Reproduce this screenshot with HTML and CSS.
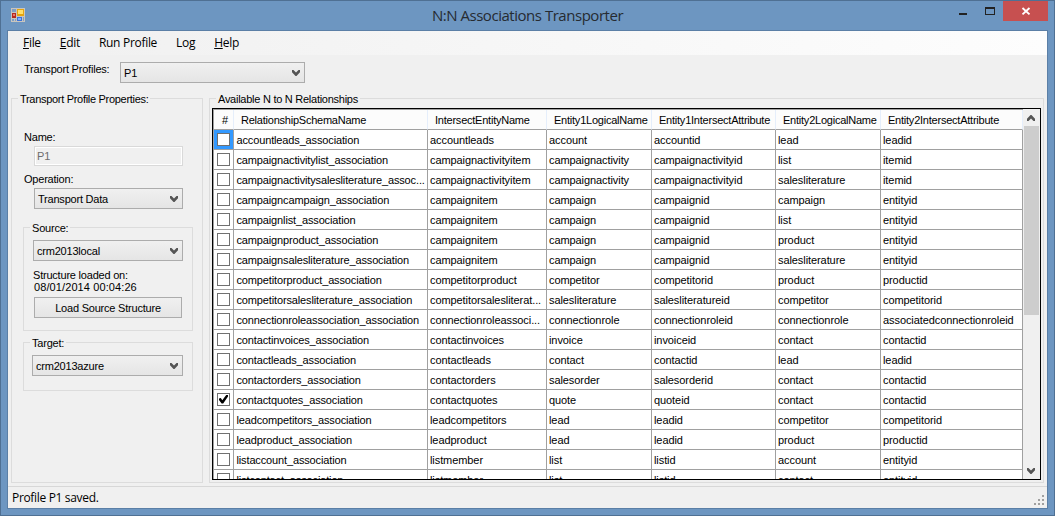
FILE: index.html
```
<!DOCTYPE html>
<html lang="en">
<head>
<meta charset="utf-8">
<title>N:N Associations Transporter</title>
<link rel="stylesheet" href="styles.css">
</head>
<body>
<svg width="0" height="0" class="defs">
  <symbol id="chev-down" viewBox="0 0 8 6"><path d="M0 0h1.5L4 2.6 6.5 0H8v2.3L4.5 6h-1L0 2.3z" fill="#555"/></symbol>
</svg>
<div class="window">
  <header class="titlebar">
    <svg class="app-icon" width="14" height="14" viewBox="0 0 14 14" shape-rendering="crispEdges">
      <rect width="14" height="14" fill="#c9c5be"/>
      <rect x="1" y="1" width="4" height="3" fill="#7f9fc4"/>
      <rect x="1" y="5" width="4" height="5" fill="#b52a1e"/><rect x="2" y="6" width="2" height="2" fill="#e8796c"/>
      <rect x="6" y="1" width="7" height="7" fill="#e5a50f"/><rect x="7" y="2" width="5" height="4" fill="#ffe06a"/>
      <rect x="6" y="9" width="5" height="4" fill="#3c73d8"/><rect x="7" y="10" width="3" height="2" fill="#7fb0ff"/>
      <rect x="1" y="11" width="2" height="2" fill="#7f9fc4"/><rect x="4" y="11" width="1" height="2" fill="#7f9fc4"/><rect x="12" y="9" width="1" height="4" fill="#7f9fc4"/>
    </svg>
    <h1 class="title">N:N Associations Transporter</h1>
    <div class="controls">
      <svg class="ctl" width="27" height="20" viewBox="0 0 27 20" shape-rendering="crispEdges"><rect x="10" y="12" width="8" height="2" fill="#222"/></svg>
      <svg class="ctl" width="27" height="20" viewBox="0 0 27 20" shape-rendering="crispEdges"><path d="M9 6h10v8H9z M10 8v5h8V8z" fill="#222" fill-rule="evenodd"/></svg>
      <svg class="ctl close" width="45" height="20" viewBox="0 0 45 20"><path d="M19.5 7l7 6.4M26.5 7l-7 6.4" stroke="#fff" stroke-width="1.9"/></svg>
    </div>
  </header>
  <div class="client">
    <nav class="menu"><span><u>F</u>ile</span><span><u>E</u>dit</span><span>Run Profile</span><span>Log</span><span><u>H</u>elp</span></nav>
    <div class="toolbar">
      <label class="lbl">Transport Profiles:</label>
      <div class="combo wide"><span>P1</span><svg width="8" height="6"><use href="#chev-down"/></svg></div>
    </div>
    <main class="main">
      <section class="group props">
        <h2 class="legend">Transport Profile Properties:</h2>
        <label class="lbl name-lbl">Name:</label>
        <div class="textbox">P1</div>
        <label class="lbl op-lbl">Operation:</label>
        <div class="combo op"><span>Transport Data</span><svg width="8" height="6"><use href="#chev-down"/></svg></div>
        <section class="group source">
          <h2 class="legend">Source:</h2>
          <div class="combo src"><span>crm2013local</span><svg width="8" height="6"><use href="#chev-down"/></svg></div>
          <p class="loaded">Structure loaded on:<br><span class="date">08/01/2014 00:04:26</span></p>
          <div class="button">Load Source Structure</div>
        </section>
        <section class="group target">
          <h2 class="legend">Target:</h2>
          <div class="combo tgt"><span>crm2013azure</span><svg width="8" height="6"><use href="#chev-down"/></svg></div>
        </section>
      </section>
      <section class="group rel">
        <h2 class="legend">Available N to N Relationships</h2>
        <div class="gridbox">
          <div class="table">
            <div class="row head"><b>#</b><b>RelationshipSchemaName</b><b>IntersectEntityName</b><b>Entity1LogicalName</b><b>Entity1IntersectAttribute</b><b>Entity2LogicalName</b><b>Entity2IntersectAttribute</b></div>
            <div class="row"><i class="sel"><s></s></i><i>accountleads_association</i><i>accountleads</i><i>account</i><i>accountid</i><i>lead</i><i>leadid</i></div>
            <div class="row"><i><s></s></i><i>campaignactivitylist_association</i><i>campaignactivityitem</i><i>campaignactivity</i><i>campaignactivityid</i><i>list</i><i>itemid</i></div>
            <div class="row"><i><s></s></i><i>campaignactivitysalesliterature_assoc...</i><i>campaignactivityitem</i><i>campaignactivity</i><i>campaignactivityid</i><i>salesliterature</i><i>itemid</i></div>
            <div class="row"><i><s></s></i><i>campaigncampaign_association</i><i>campaignitem</i><i>campaign</i><i>campaignid</i><i>campaign</i><i>entityid</i></div>
            <div class="row"><i><s></s></i><i>campaignlist_association</i><i>campaignitem</i><i>campaign</i><i>campaignid</i><i>list</i><i>entityid</i></div>
            <div class="row"><i><s></s></i><i>campaignproduct_association</i><i>campaignitem</i><i>campaign</i><i>campaignid</i><i>product</i><i>entityid</i></div>
            <div class="row"><i><s></s></i><i>campaignsalesliterature_association</i><i>campaignitem</i><i>campaign</i><i>campaignid</i><i>salesliterature</i><i>entityid</i></div>
            <div class="row"><i><s></s></i><i>competitorproduct_association</i><i>competitorproduct</i><i>competitor</i><i>competitorid</i><i>product</i><i>productid</i></div>
            <div class="row"><i><s></s></i><i>competitorsalesliterature_association</i><i>competitorsalesliterat...</i><i>salesliterature</i><i>salesliteratureid</i><i>competitor</i><i>competitorid</i></div>
            <div class="row"><i><s></s></i><i>connectionroleassociation_association</i><i>connectionroleassoci...</i><i>connectionrole</i><i>connectionroleid</i><i>connectionrole</i><i>associatedconnectionroleid</i></div>
            <div class="row"><i><s></s></i><i>contactinvoices_association</i><i>contactinvoices</i><i>invoice</i><i>invoiceid</i><i>contact</i><i>contactid</i></div>
            <div class="row"><i><s></s></i><i>contactleads_association</i><i>contactleads</i><i>contact</i><i>contactid</i><i>lead</i><i>leadid</i></div>
            <div class="row"><i><s></s></i><i>contactorders_association</i><i>contactorders</i><i>salesorder</i><i>salesorderid</i><i>contact</i><i>contactid</i></div>
            <div class="row"><i><s><svg width="9" height="9" viewBox="0 0 9 9"><path d="M0 3.6L1.8 3l1.5 2.2L7.2 0H9v1.6L4.2 8.6H2.6L0 5z" fill="#000"/></svg></s></i><i>contactquotes_association</i><i>contactquotes</i><i>quote</i><i>quoteid</i><i>contact</i><i>contactid</i></div>
            <div class="row"><i><s></s></i><i>leadcompetitors_association</i><i>leadcompetitors</i><i>lead</i><i>leadid</i><i>competitor</i><i>competitorid</i></div>
            <div class="row"><i><s></s></i><i>leadproduct_association</i><i>leadproduct</i><i>lead</i><i>leadid</i><i>product</i><i>productid</i></div>
            <div class="row"><i><s></s></i><i>listaccount_association</i><i>listmember</i><i>list</i><i>listid</i><i>account</i><i>entityid</i></div>
            <div class="row"><i><s></s></i><i>listcontact_association</i><i>listmember</i><i>list</i><i>listid</i><i>contact</i><i>entityid</i></div>
          </div>
          <div class="scroll">
            <svg class="up" width="8" height="6"><use href="#chev-down"/></svg>
            <div class="thumb"></div>
            <svg class="down" width="8" height="6"><use href="#chev-down"/></svg>
          </div>
        </div>
      </section>
    </main>
    <footer class="status"><span>Profile P1 saved.</span>
      <svg width="10" height="10" viewBox="0 0 10 10" shape-rendering="crispEdges" fill="#a0a0a0"><path d="M8 0h2v2H8zM8 4h2v2H8zM8 8h2v2H8zM4 4h2v2H4zM4 8h2v2H4zM0 8h2v2H0z"/></svg>
    </footer>
  </div>
</div>
</body>
</html>
```
FILE: styles.css
```
* { box-sizing: border-box; }
body { margin: 0; font: 11px/13px "Liberation Sans", Arial, sans-serif; letter-spacing: -0.21px; color: #000; overflow: hidden; }
h1, h2, p { margin: 0; font-size: inherit; font-weight: normal; }
.defs { position: absolute; }
.window { width: 1055px; height: 516px; background: #6d96c1; border: 1px solid #4f7093; padding: 0 6px 6px; display: flex; flex-direction: column; }

.titlebar { height: 29px; flex: none; display: grid; grid-template-columns: 100px 1fr 100px; }
.app-icon { margin: 7px 0 0 4px; }
.title { font: 15px/29px "Open Sans", "Noto Sans", sans-serif; color: #262b31; text-align: center; letter-spacing: -0.47px; }
.controls { display: flex; justify-content: flex-end; }
.ctl { flex: none; }
.close { background: #c75050; }

.client { flex: 1; min-height: 0; background: #f0f0f0; border: 1px solid #5b7fa6; display: flex; flex-direction: column; }
.menu { height: 24px; flex: none; display: flex; gap: 19px; padding-left: 15px; background: linear-gradient(90deg, #f0f0f0, #fdfdfd); font: 12px/24px "Open Sans", "Noto Sans", sans-serif; letter-spacing: -0.3px; }
.menu u { text-underline-offset: 1px; }
.toolbar { height: 39px; flex: none; display: flex; padding: 7px 0 0 16px; }
.toolbar .lbl { width: 96px; padding-top: 1px; white-space: nowrap; }
.lbl { display: block; }
.combo { height: 21px; display: flex; align-items: center; justify-content: space-between; border: 1px solid #acacac; background: linear-gradient(#f0f0f0, #e5e5e5); padding: 0 4px 0 3px; white-space: nowrap; }
.combo span { padding-top: 1px; }
.wide { width: 185px; }

.main { flex: 1; min-height: 0; display: flex; gap: 6px; padding: 4px 3px 3px; }
.group { border: 1px solid #dcdcdc; }
.legend { width: max-content; height: 14px; margin: -7px 0 0 6px; padding: 1px 2px 0; background: #f0f0f0; white-space: nowrap; }
.props { width: 192px; flex: none; }
.props > .legend { letter-spacing: -0.3px; }
.name-lbl { margin: 25px 0 0 12px; }
.textbox { width: 149px; height: 20px; margin: 2px 0 0 22px; border: 1px solid #d9d9d9; box-shadow: inset 0 0 0 1px #fff; padding: 3px 2px; color: #6d6d6d; }
.op-lbl { margin: 7px 0 0 12px; }
.op { width: 149px; margin: 2px 0 0 22px; }
.source { width: 170px; height: 104px; margin: 18px 0 0 11px; }
.src { width: 150px; margin: 5px 0 0 9px; }
.loaded { margin: 8px 0 0 9px; line-height: 12px; }
.date { padding-left: 1px; letter-spacing: 0.1px; }
.button { width: 148px; height: 21px; margin: 4px 0 0 10px; border: 1px solid #acacac; background: linear-gradient(#f0f0f0, #e5e5e5); line-height: 20px; text-align: center; }
.target { width: 170px; height: 49px; margin: 11px 0 0 11px; }
.tgt { width: 151px; margin: 5px 0 0 8px; }

.rel { flex: 1; padding: 0 2px 2px; display: flex; flex-direction: column; }
.rel .legend { margin-left: 4px; letter-spacing: -0.26px; }
.gridbox { margin-top: 2px; height: 372px; border: 1px solid #000; background: #fff; display: flex; overflow: hidden; }
.table { width: 810px; flex: none; border-left: 1px solid #a0a0a0; border-top: 1px solid #a0a0a0; }
.row { display: grid; grid-template-columns: 20px 194px 119px 105px 124px 105px 142px; height: 20px; }
.row i { font-style: normal; line-height: 19px; padding: 1px 0 0 2px; letter-spacing: -0.08px; border-right: 1px solid #a0a0a0; border-bottom: 1px solid #a0a0a0; white-space: nowrap; overflow: hidden; }
.row i:nth-child(2) { letter-spacing: -0.14px; padding-left: 2.5px; }
.row i:first-child { padding: 3px 0 0 3px; }
.head b { font-weight: normal; line-height: 19px; padding: 1px 0 0 7px; height: 20px; letter-spacing: -0.23px; border-right: 1px solid #e5eefb; border-bottom: 1px solid #a0a0a0; background: #fcfcfc; white-space: nowrap; }
.head b:first-child { padding-left: 8px; }
.row s { display: block; width: 13px; height: 13px; border: 1px solid #707070; background: #fff; text-decoration: none; padding: 1px; }
.row s svg { display: block; }
.row .sel { background: #3399ff; }
.scroll { flex: 1; background: #f0f0f0; padding: 0 1px; display: flex; flex-direction: column; }
.up { transform: rotate(180deg); margin: 6px auto 5px 3px; flex: none; }
.thumb { height: 189px; flex: none; background: #cdcdcd; }
.down { margin: auto auto 5px 3px; }

.status { height: 22px; flex: none; border-top: 1px solid #d7d7d7; display: flex; justify-content: space-between; padding: 0 3px 0 4px; font: 12px/22px "Open Sans", "Noto Sans", sans-serif; letter-spacing: -0.33px; }
.status svg { margin-top: 8px; }
```
